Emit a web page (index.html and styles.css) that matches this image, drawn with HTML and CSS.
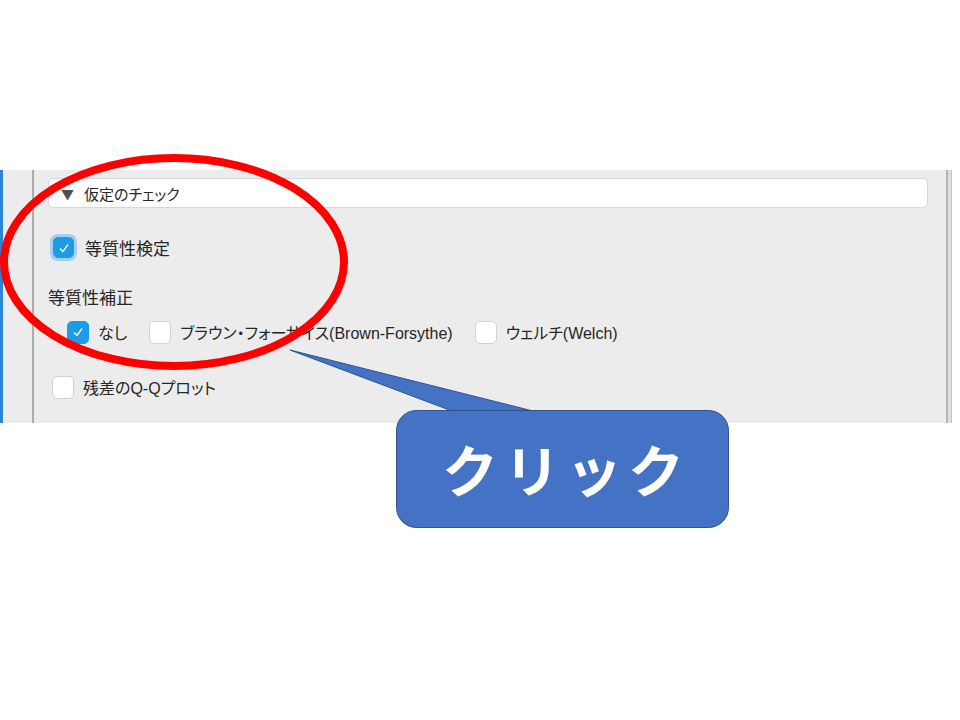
FILE: index.html
```html
<!DOCTYPE html>
<html lang="ja">
<head>
    <meta charset="UTF-8">
    <title>仮定のチェック - クリック</title>
    <link rel="stylesheet" href="styles.css">
</head>
<body>
    <div class="slide">
        <!-- 画面キャプチャ部分 -->
        <div class="shot">
            <div class="side"></div>
            <div class="panel">
                <div class="section-head">
                    <span class="arrow">▼</span>
                    <span class="section-title">仮定のチェック</span>
                </div>

                <label class="check-row first">
                    <span class="box checked focused">
                        <svg width="14" height="14" viewBox="0 0 14 14"><polyline points="3,7.5 6,10.5 11,3.5" fill="none" stroke="#fff" stroke-width="1.4"/></svg>
                    </span>
                    <span class="label">等質性検定</span>
                </label>

                <div class="group-title">等質性補正</div>
                <div class="option-row">
                    <label class="check-row">
                        <span class="box checked">
                            <svg width="14" height="14" viewBox="0 0 14 14"><polyline points="3,7.5 6,10.5 11,3.5" fill="none" stroke="#fff" stroke-width="1.4"/></svg>
                        </span>
                        <span class="label kana">なし</span>
                    </label>
                    <label class="check-row">
                        <span class="box"></span>
                        <span class="label kana">ブラウン・フォーサイス(Brown-Forsythe)</span>
                    </label>
                    <label class="check-row">
                        <span class="box"></span>
                        <span class="label kana">ウェルチ(Welch)</span>
                    </label>
                </div>

                <label class="check-row last">
                    <span class="box"></span>
                    <span class="label kana">残差のQ-Qプロット</span>
                </label>
            </div>
            <div class="edge"></div>
        </div>

        <!-- 注釈（赤丸と吹き出し） -->
        <svg class="marks" width="960" height="720" viewBox="0 0 960 720">
            <polygon points="452,411 290,350 533,411" fill="#4472c4" stroke="#2f528f" stroke-width="1"/>
            <rect x="396.5" y="410.5" width="332" height="117" rx="20" ry="20" fill="#4472c4" stroke="#2f528f" stroke-width="1"/>
            <rect x="440" y="411.5" width="105" height="3" fill="#4472c4"/>
            <ellipse cx="174" cy="262" rx="170" ry="104" fill="none" stroke="#ff0000" stroke-width="8"/>
        </svg>
        <div class="callout-text">クリック</div>
    </div>
</body>
</html>
```

FILE: styles.css
```css
body {
    margin: 0;
    padding: 0;
    background-color: #ffffff;
    font-family: "Noto Sans CJK JP", "Noto Sans", sans-serif;
    color: #262626;
}

.slide {
    position: relative;
    width: 960px;
    height: 720px;
    overflow: hidden;
}

.shot {
    display: flex;
    width: 952px;
    height: 253px;
    margin-top: 170px;
    background-color: #ececec;
}

.side {
    width: 29px;
    border-left: 3px solid #2a84d8;
    border-right: 2px solid #acacac;
}

.panel {
    flex: 1;
    display: flex;
    flex-direction: column;
    padding: 8px 18px 0 14px;
}

.edge {
    width: 3px;
    border-left: 2px solid #b4b4b4;
    border-right: 1px solid #c4c4c4;
    background-color: #dedede;
}

.section-head {
    display: flex;
    align-items: center;
    height: 28px;
    background-color: #ffffff;
    border: 1px solid #d6d6d6;
    border-radius: 5px;
    padding-left: 12px;
}

.arrow {
    font-size: 13px;
    color: #505050;
    margin-right: 10px;
}

.section-title {
    font-size: 15px;
    font-feature-settings: "palt";
}

.check-row {
    display: flex;
    align-items: center;
}

.check-row.first {
    margin-top: 27px;
    margin-left: 5px;
}

.check-row.last {
    margin-top: 31px;
    margin-left: 4px;
}

.box {
    box-sizing: border-box;
    width: 22px;
    height: 23px;
    border: 1px solid #d2d2d2;
    border-radius: 5px;
    background-color: #ffffff;
    display: flex;
    justify-content: center;
    align-items: center;
    margin-right: 9px;
}

.box.checked {
    background-color: #1e9be6;
    border-color: #1e9be6;
}

.box.focused {
    width: 21px;
    height: 21px;
    box-shadow: 0 0 0 3px #a4cff3;
    margin-right: 11px;
}

.label {
    font-size: 17px;
}

.label.kana {
    font-family: "Liberation Sans", "Noto Sans CJK JP", sans-serif;
    font-size: 16px;
    font-feature-settings: "palt";
}

.group-title {
    font-size: 17px;
    margin-top: 24px;
}

.option-row {
    display: flex;
    align-items: center;
    gap: 22px;
    margin-top: 11px;
    margin-left: 19px;
}

.marks {
    position: absolute;
    top: 0;
    left: 0;
}

.callout-text {
    position: absolute;
    left: 397px;
    top: 411px;
    width: 332px;
    height: 113px;
    display: flex;
    justify-content: center;
    align-items: center;
    padding-left: 6px;
    box-sizing: border-box;
    color: #ffffff;
    font-size: 56px;
    font-weight: bold;
    letter-spacing: 6px;
}
```
